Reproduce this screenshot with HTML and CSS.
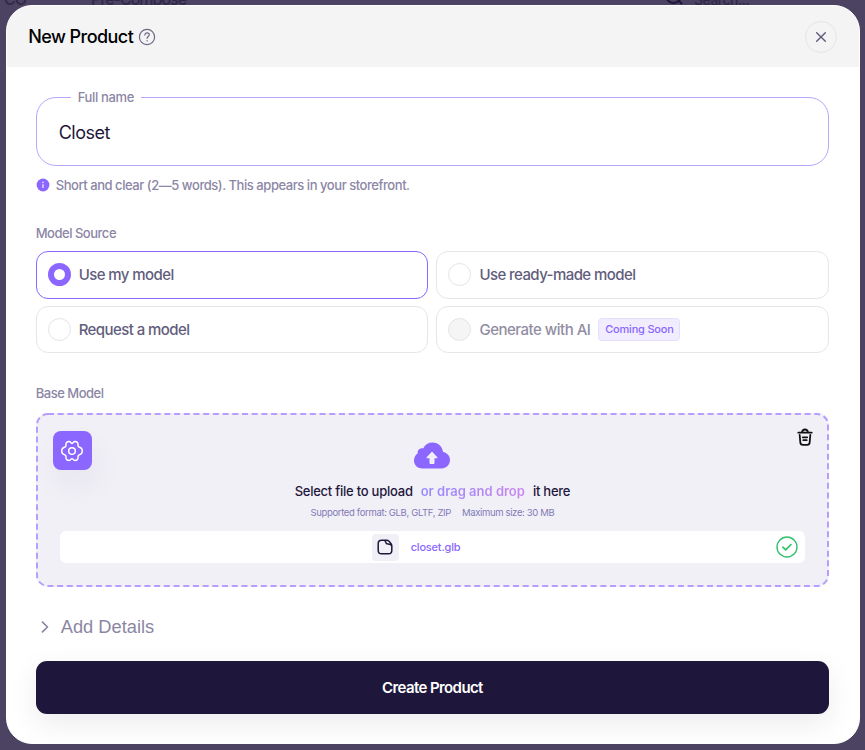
FILE: index.html
```html
<!DOCTYPE html>
<html lang="en">
<head>
    <meta charset="UTF-8">
    <title>New Product</title>
    <link rel="stylesheet" href="styles.css">
</head>
<body>
    <!-- Page behind the modal -->
    <div class="topbar">
        <span class="topbar-logo">CO</span>
        <span class="topbar-title">Pre-Compose</span>
        <div class="topbar-search">
            <svg width="20" height="20" viewBox="0 0 20 20" fill="none" stroke="currentColor" stroke-width="2"><circle cx="9.5" cy="9.5" r="7.5"/><path d="M15 15l3 3"/></svg>
            <span>Search...</span>
        </div>
    </div>

    <div class="modal">
        <div class="modal-header">
            <h1>New Product</h1>
            <svg class="help-icon" width="18" height="18" viewBox="0 0 18 18" fill="none" stroke="currentColor" stroke-width="1.2" stroke-linecap="round">
                <circle cx="9" cy="9" r="7.6"/>
                <path d="M6.9 7.1c0-1.4.9-2.3 2.2-2.3s2.2.9 2.2 2c0 1.7-2.2 1.7-2.2 3.5"/>
                <path d="M9.1 12.7v.2"/>
            </svg>
            <button class="close-btn" aria-label="Close">
                <svg width="12" height="12" viewBox="0 0 12 12" fill="none" stroke="currentColor" stroke-width="1.4" stroke-linecap="round"><path d="M1.7 1.7l8.6 8.6M10.3 1.7l-8.6 8.6"/></svg>
            </button>
        </div>

        <div class="modal-body">
            <fieldset class="name-field">
                <legend><span class="legend-text">Full name</span></legend>
                <span class="name-value">Closet</span>
            </fieldset>
            <div class="hint">
                <svg width="14" height="14" viewBox="0 0 14 14"><circle cx="7" cy="7" r="6.4" fill="#8b67ff"/><path d="M7 6.3v3.8" stroke="#e2d8ff" stroke-width="1.5"/><circle cx="7" cy="4.3" r=".9" fill="#e2d8ff"/></svg>
                <span class="hint-text">Short and clear (2—5 words). This appears in your storefront.</span>
            </div>

            <div class="label label-source">Model Source</div>
            <div class="options">
                <div class="option selected"><span class="radio"></span><span>Use my model</span></div>
                <div class="option"><span class="radio"></span><span>Use ready-made model</span></div>
                <div class="option"><span class="radio"></span><span>Request a model</span></div>
                <div class="option disabled"><span class="radio"></span><span>Generate with AI</span><span class="badge">Coming Soon</span></div>
            </div>

            <div class="label label-base">Base Model</div>
            <div class="dropzone">
                <svg class="dashes" width="793" height="174" fill="none"><rect x="1" y="1" width="791" height="172" rx="11"/></svg>
                <button class="settings-btn" aria-label="Settings">
                    <svg width="22" height="22" viewBox="0 0 24 24" fill="none" stroke="currentColor" stroke-width="1.6" stroke-linejoin="round">
                        <circle cx="12" cy="12" r="3.6"/>
                        <path d="M12 3.7C13 3.7 13.3 1.7 15.2 1.7C17.3 1.7 18.8 3 18.6 5C18.4 6.8 18.5 7.6 20.2 8C22.3 8.5 23.2 10 23.2 12C23.2 14 22.3 15.5 20.2 16C18.5 16.4 18.4 17.2 18.6 19C18.8 21 17.3 22.3 15.2 22.3C13.3 22.3 13 20.3 12 20.3C11 20.3 10.7 22.3 8.8 22.3C6.7 22.3 5.2 21 5.4 19C5.6 17.2 5.5 16.4 3.8 16C1.7 15.5 .8 14 .8 12C.8 10 1.7 8.5 3.8 8C5.5 7.6 5.6 6.8 5.4 5C5.2 3 6.7 1.7 8.8 1.7C10.7 1.7 11 3.7 12 3.7Z"/>
                    </svg>
                </button>
                <button class="delete-btn" aria-label="Delete">
                    <svg width="16" height="18" viewBox="0 0 16 18" fill="none" stroke="currentColor" stroke-width="1.8" stroke-linecap="round" stroke-linejoin="round">
                        <path d="M1.3 4.7h13.4M5 4.4c.3-2 .8-2.9 3-2.9s2.7.9 3 2.9M2.7 7l.6 7.3c.2 1.8 1 2.5 2.5 2.5h4.4c1.5 0 2.3-.7 2.5-2.5l.6-7.3M5.8 9.3h4.4M6.3 12.2h3.4"/>
                    </svg>
                </button>
                <svg class="cloud" width="36" height="27" viewBox="0 0 36 27">
                    <path fill="#8b67ff" d="M8 26.5C3.5 26.5 0 23.2 0 18.8C0 15.2 1.6 12.8 3.7 11.6C3.1 8 5.6 5.8 9.3 6.2C11.1 2.4 14.4.4 18.5.4C24.2.4 28.4 4.2 29 10C33 10.7 36 13.8 36 18C36 22.8 32.2 26.5 27.5 26.5Z"/>
                    <path fill="#f1f0f7" d="M18 9.4l5.3 5.8c.4.6.2 1-.5 1h-2.3v4.7q0 1-1 1h-3q-1 0-1-1v-4.7h-2.3c-.7 0-.9-.4-.5-1z"/>
                </svg>
                <div class="drop-text"><span class="drop-select">Select file to upload</span><span class="drop-drag">or drag and drop</span><span class="drop-here">it here</span></div>
                <div class="drop-meta"><span>Supported format: GLB, GLTF, ZIP</span><span>Maximum size: 30 MB</span></div>
                <div class="file-row">
                    <span class="file-icon">
                        <svg width="16" height="16" viewBox="0 0 16 16" fill="none" stroke="currentColor" stroke-width="1.5" stroke-linejoin="round"><path d="M9.6 1.2H4.5Q1.2 1.2 1.2 4.5v7q0 3.3 3.3 3.3h7q3.3 0 3.3-3.3V6.8q0-1.6-1-2.6L12 2.2q-1-1-2.4-1M7 1.2c1.3.2 1.7.9 1.8 2.1.2 1.3.9 1.7 2.2 1.8 1.7.1 3 .1 3.8 1.7"/></svg>
                    </span>
                    <span class="file-name">closet.glb</span>
                    <svg class="file-ok" width="22" height="22" viewBox="0 0 22 22" fill="none" stroke="#35c06c" stroke-width="1.4" stroke-linecap="round" stroke-linejoin="round"><circle cx="11" cy="11" r="10"/><path stroke-width="1.7" d="M6.9 11.2l2.8 2.7 5.3-5.4"/></svg>
                </div>
            </div>

            <div class="details">
                <svg width="8" height="12" viewBox="0 0 8 12" fill="none" stroke="currentColor" stroke-width="1.7" stroke-linecap="round" stroke-linejoin="round"><path d="M1.5 1.2L6.5 6l-5 4.8"/></svg>
                <span>Add Details</span>
            </div>

            <button class="create-btn"><span>Create Product</span></button>
        </div>
    </div>
</body>
</html>
```
FILE: styles.css
```css
* { box-sizing: border-box; }
body { margin: 0; height: 750px; overflow: hidden; position: relative; background: #4b4361; font-family: Inter, "Liberation Sans", sans-serif; font-weight: 500; color: #1f173b; padding: 5px 5.3px 0 5.7px; }
button { font: inherit; border: 0; padding: 0; cursor: pointer; }
svg { display: block; flex: none; }
span { white-space: nowrap; }

.topbar { position: absolute; top: -11px; left: 4px; width: 861px; height: 20px; display: flex; align-items: center; font-size: 16px; color: #302849; }
.topbar-logo { width: 87px; letter-spacing: -1px; }
.topbar-title { width: 112px; letter-spacing: -1px; }
.topbar-search { display: flex; align-items: center; gap: 10px; margin-left: 461px; font-size: 14px; letter-spacing: -0.5px; }
.topbar-search svg { color: #1f173b; margin-top: -6px; }

.modal { position: relative; height: 739px; background: #fff; border: 1px solid #fff; border-radius: 26px; overflow: hidden; }
.modal-header { height: 61px; padding: 0 21.5px; background: #f4f4f4; display: flex; align-items: center; }
.modal-header h1 { margin: 0; font-size: 18px; font-weight: 500; letter-spacing: -0.55px; color: #000; }
.help-icon { margin-left: 5px; color: #6d6786; }
.close-btn { margin-left: auto; width: 32px; height: 32px; border: 1px solid #e4e4e6; border-radius: 50%; background: none; color: #5f5a7b; display: flex; align-items: center; justify-content: center; }

.modal-body { padding: 22px 29.5px 0 29px; }
.name-field { margin: 0; height: 77px; padding: 0 22px; border: 1px solid #b9a5fb; border-radius: 20px; }
.name-field legend { margin-left: 12px; padding: 0 7px; height: 16px; line-height: 16px; font-size: 13px; letter-spacing: -0.35px; color: #8c86a6; }
.name-value { display: block; margin-top: 16px; line-height: 24px; font-size: 18px; font-weight: 400; letter-spacing: -0.5px; }
.hint { display: flex; align-items: center; gap: 6px; height: 16px; margin-top: 11px; font-size: 13px; letter-spacing: -0.45px; color: #8c86a6; }

.label { height: 16px; line-height: 16px; font-size: 13px; letter-spacing: -0.48px; color: #8c86a6; }
.label-source { margin-top: 32px; }
.label-base { margin-top: 32px; }
.options { margin-top: 10px; display: grid; grid-template-columns: 1fr 1fr; gap: 7px 8px; }
.option { height: 47.5px; padding-left: 11px; border: 1px solid #e6e6e9; border-radius: 12px; display: flex; align-items: center; font-size: 15px; letter-spacing: -0.58px; color: #625d7c; }
.option.selected { border-color: #8b67ff; }
.radio { width: 23px; height: 23px; margin-right: 8px; border: 1px solid #e4e4e6; border-radius: 50%; }
.selected .radio { border: 6px solid #8b67ff; }
.disabled { color: #918da3; letter-spacing: -0.5px; }
.disabled .radio { background: #f5f5f6; }
.badge { width: 82px; height: 23px; margin-left: 8px; border: 1px solid #e6deff; border-radius: 4px; background: #f1edff; color: #8b67ff; font-size: 11px; letter-spacing: -0.2px; line-height: 21px; text-align: center; }

.dropzone { position: relative; height: 174px; margin-top: 12px; padding: 29px 24px 0; border-radius: 12px; background: #f1f0f7; }
.dashes { position: absolute; inset: 0; stroke: #b69dff; stroke-width: 2; stroke-dasharray: 6 3.7; }
.settings-btn { position: absolute; left: 17px; top: 18px; width: 39px; height: 39px; border-radius: 8px; background: #8b67ff; color: #fff; display: flex; align-items: center; justify-content: center; box-shadow: 4px 16px 30px rgba(31, 23, 59, .05); }
.delete-btn { position: absolute; right: 16px; top: 15px; background: none; color: #111; }
.cloud { margin: 0 auto; }
.drop-text { margin-top: 12px; height: 20px; display: flex; align-items: center; justify-content: center; font-size: 13px; letter-spacing: -0.24px; }
.drop-drag { margin: 0 8px; font-weight: 600; letter-spacing: 0; background: linear-gradient(90deg, #948bff, #cb86ed); -webkit-background-clip: text; background-clip: text; color: transparent; }
.drop-meta { margin-top: 4px; height: 14px; display: flex; align-items: center; justify-content: center; gap: 11px; font-size: 9.5px; font-weight: 400; letter-spacing: -0.35px; color: #817ab7; }
.file-row { height: 32px; margin-top: 12px; border-radius: 6px; background: #fff; display: flex; align-items: center; padding-left: 312px; }
.file-icon { width: 27px; height: 27px; border-radius: 4px; background: #f1f0f7; display: flex; align-items: center; justify-content: center; }
.file-name { margin-left: 12px; font-size: 11px; letter-spacing: -0.2px; color: #8b67ff; }
.file-ok { margin-left: auto; margin-right: 7px; }

.details { margin: 28px 0 0 5px; height: 24px; display: flex; align-items: center; gap: 12px; font-family: "Liberation Sans", Arial, sans-serif; font-size: 18.3px; font-weight: 400; color: #8c86a6; }
.create-btn { display: flex; align-items: center; justify-content: center; width: 100%; height: 53px; margin-top: 22px; border-radius: 11px; background: #1f173b; color: #fff; font-size: 15px; font-weight: 600; letter-spacing: -0.6px; box-shadow: 0 10px 30px rgba(0, 0, 0, .08); }
```
